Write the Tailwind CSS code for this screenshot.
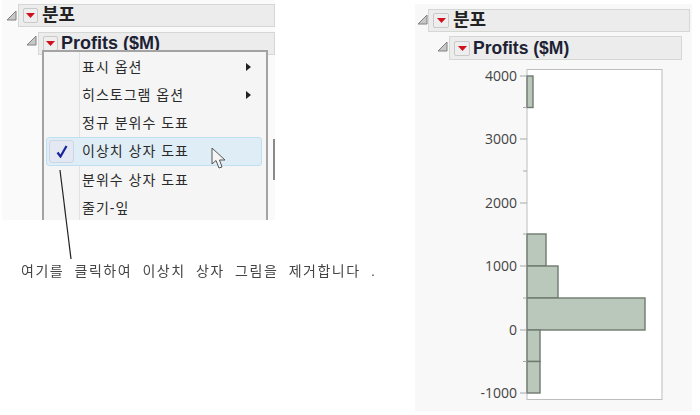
<!DOCTYPE html>
<html lang="ko">
<head>
  <meta charset="UTF-8">
  <title>분포</title>
  <script src="https://cdn.jsdelivr.net/npm/@tailwindcss/browser@4"></script>
</head>
<body class="bg-white">
  <div class="flex w-[700px] h-[415px] overflow-hidden font-['Liberation_Sans','Noto_Sans_CJK_KR',sans-serif] blur-[0.5px]">

    <!-- left: menu shot + caption -->
    <div class="relative w-[413px] shrink-0 pl-[2px]">
      <div class="relative w-[273px] h-[220px] bg-[#fafafa] overflow-hidden">
        <div class="flex items-center h-[23px] mt-[4px] ml-[16px] bg-[#ececec] border border-[#d3d8d3]">
          <svg class="absolute left-[4px] top-[10px] w-[11px] h-[11px]" viewBox="0 0 11 11"><path d="M10 1V10H1Z" fill="#c8c8c8" stroke="#808080"/></svg>
          <span class="ml-[4px] w-[15px] h-[15px] flex items-center justify-center bg-[#eeeeee] border border-[#c9c9c9] rounded-[2px]">
            <svg class="w-[9px] h-[5px]" viewBox="0 0 9 5"><path d="M0 0H9L4.500 5Z" fill="#d0101c"/></svg>
          </span>
          <span class="ml-[4px] text-[18px] font-bold text-[#222]">분포</span>
        </div>
        <div class="flex items-center h-[23px] mt-[5px] ml-[36px] bg-[#ececec] border border-[#d3d8d3]">
          <svg class="absolute left-[24px] top-[35px] w-[11px] h-[11px]" viewBox="0 0 11 11"><path d="M10 1V10H1Z" fill="#c8c8c8" stroke="#808080"/></svg>
          <span class="ml-[4px] w-[15px] h-[15px] flex items-center justify-center bg-[#eeeeee] border border-[#c9c9c9] rounded-[2px]">
            <svg class="w-[9px] h-[5px]" viewBox="0 0 9 5"><path d="M0 0H9L4.500 5Z" fill="#d0101c"/></svg>
          </span>
          <span class="ml-[3px] text-[18px] font-bold text-[#1c2233]">Profits ($M)</span>
        </div>
        <div class="absolute right-0 top-[139px] w-[2px] h-[41px] bg-[#8a8a8a]"></div>

        <!-- popup menu -->
        <div class="absolute left-[40px] top-[50px] w-[226px] h-[180px] bg-[#f5f5f5] border-2 border-[#a3a3a3] text-[14px] tracking-[1px] text-[#2a2a2a]">
          <div class="absolute left-[35px] top-0 bottom-0 w-px bg-[#e2e2e2]"></div>
          <div class="flex items-center h-[28px] pl-[38px] pr-[15px] mt-[1px] justify-between">
            <span>표시 옵션</span>
            <svg class="w-[5px] h-[8px]" viewBox="0 0 5 8"><path d="M0 0L5 4L0 8Z" fill="#222"/></svg>
          </div>
          <div class="flex items-center h-[28px] pl-[38px] pr-[15px] justify-between">
            <span>히스토그램 옵션</span>
            <svg class="w-[5px] h-[8px]" viewBox="0 0 5 8"><path d="M0 0L5 4L0 8Z" fill="#222"/></svg>
          </div>
          <div class="flex items-center h-[28px] pl-[38px]">정규 분위수 도표</div>
          <div class="relative flex items-center h-[29px] ml-[2px] w-[216px] pl-[35px] bg-[#dfeef6] border border-[#bfe0f0] rounded-[3px]">
            <span class="absolute left-[2px] top-[2px] w-[25px] h-[23px] flex items-center justify-center bg-[#e3e8f2] border border-[#ccd6e6] rounded-[3px]">
              <svg class="w-[12px] h-[13px]" viewBox="0 0 12 13"><path d="M1.500 7.500L4.500 11.500L10.500 1" fill="none" stroke="#1a22a0" stroke-width="2.200"/></svg>
            </span>
            이상치 상자 도표
            <svg class="absolute left-[164px] top-[9px] w-[16px] h-[23px]" viewBox="0 0 16 23"><path d="M1 1V17L5 13.500L8 21L11 20L8.500 13H14Z" fill="#f4f4f4" stroke="#555"/></svg>
          </div>
          <div class="flex items-center h-[28px] pl-[38px]">분위수 상자 도표</div>
          <div class="flex items-center h-[28px] pl-[38px]">줄기-잎</div>
        </div>
      </div>

      <!-- callout -->
      <svg class="absolute left-[50px] top-[165px] w-[30px] h-[100px]" viewBox="0 0 30 100"><path d="M10 5L21 94" stroke="#222" stroke-width="1.200"/></svg>
      <p class="absolute left-[21px] top-[261px] text-[14px] tracking-[1.5px] [word-spacing:5px] text-[#444] whitespace-nowrap">여기를 클릭하여 이상치 상자 그림을 제거합니다 .</p>
    </div>

    <!-- right: histogram report -->
    <div class="relative w-[277px] h-[407px] mt-[4px] ml-[2px] bg-[#f8f8f8]">
      <div class="flex items-center h-[23px] mt-[5px] ml-[13px] mr-[2px] bg-[#ececec] border border-[#d3d8d3]">
        <svg class="absolute left-[2px] top-[10px] w-[11px] h-[11px]" viewBox="0 0 11 11"><path d="M10 1V10H1Z" fill="#c8c8c8" stroke="#808080"/></svg>
        <span class="ml-[4px] w-[16px] h-[15px] flex items-center justify-center bg-[#eeeeee] border border-[#c9c9c9] rounded-[2px]">
          <svg class="w-[9px] h-[5px]" viewBox="0 0 9 5"><path d="M0 0H9L4.500 5Z" fill="#d0101c"/></svg>
        </span>
        <span class="ml-[4px] text-[18px] font-bold text-[#222]">분포</span>
      </div>
      <div class="flex items-center h-[24px] mt-[4px] ml-[34px] mr-[10px] bg-[#ececec] border border-[#d3d8d3]">
        <svg class="absolute left-[22px] top-[37px] w-[11px] h-[11px]" viewBox="0 0 11 11"><path d="M10 1V10H1Z" fill="#c8c8c8" stroke="#808080"/></svg>
        <span class="ml-[4px] w-[16px] h-[15px] flex items-center justify-center bg-[#eeeeee] border border-[#c9c9c9] rounded-[2px]">
          <svg class="w-[9px] h-[5px]" viewBox="0 0 9 5"><path d="M0 0H9L4.500 5Z" fill="#d0101c"/></svg>
        </span>
        <span class="ml-[3px] text-[17.500px] font-bold text-[#1c2233]">Profits ($M)</span>
      </div>

      <svg class="block mt-[5px] w-[277px] h-[346px] font-['Open_Sans','Liberation_Sans',sans-serif]" viewBox="415 65 277 346">
        <rect x="527" y="69.500" width="135" height="330" fill="#fff" stroke="#bdbdbd"/>
        <g fill="#b9c8ba" stroke="#6f796f" stroke-width="1.400">
          <rect x="527" y="76" width="6" height="31.500"/>
          <rect x="527" y="234" width="19" height="32"/>
          <rect x="527" y="266" width="31" height="32"/>
          <rect x="527" y="298" width="118" height="32"/>
          <rect x="527" y="330" width="13" height="31.500"/>
          <rect x="527" y="361.500" width="13" height="31.500"/>
        </g>
        <g stroke="#a8a8a8">
          <path d="M520 76H527M520 139H527M520 203H527M520 266H527M520 330H527M520 393H527"/>
          <path d="M523 107.500H527M523 171H527M523 234H527M523 298H527M523 361.500H527"/>
        </g>
        <g font-size="14" fill="#444" text-anchor="end">
          <text x="517" y="81">4000</text>
          <text x="517" y="144">3000</text>
          <text x="517" y="208">2000</text>
          <text x="517" y="271">1000</text>
          <text x="517" y="335">0</text>
          <text x="517" y="398">-1000</text>
        </g>
      </svg>
    </div>
  </div>
</body>
</html>
